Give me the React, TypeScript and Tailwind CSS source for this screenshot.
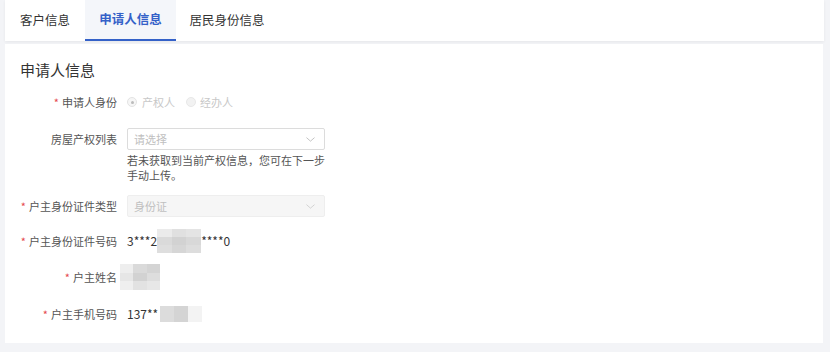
import { ChevronDown } from "lucide-react";

const font = { fontFamily: '"Noto Sans CJK SC", "Noto Sans", sans-serif' };

function Label({ text, required }: { text: string; required?: boolean }) {
  return (
    <div className="w-[97px] shrink-0 whitespace-nowrap text-right text-[11px] leading-[22px] text-[#555]">
      {required && <span className="mr-[3px] text-[#e5484d]">*</span>}
      {text}
    </div>
  );
}

function Mosaic({ cells, className }: { cells: string[][]; className: string }) {
  return (
    <div className={"flex flex-col blur-[0.6px] " + className}>
      {cells.map((row, i) => (
        <div key={i} className="flex flex-1">
          {row.map((c, j) => (
            <div key={j} className="flex-1" style={{ background: c }} />
          ))}
        </div>
      ))}
    </div>
  );
}

export default function App() {
  return (
    <div className="h-[352px] w-[830px] bg-[#f3f4f7] px-[5px]" style={font}>
      <div className="flex h-[41px] w-[819px] items-stretch bg-white shadow-[0_1px_3px_rgba(0,0,0,0.06)]">
        <div className="flex w-[80px] items-center justify-center text-[12.5px] text-[#333]">客户信息</div>
        <div className="flex w-[91px] items-center justify-center border-b-2 border-[#3461c8] bg-[#f4f6fa] text-[12.5px] font-semibold text-[#3461c8]">
          申请人信息
        </div>
        <div className="flex w-[102px] items-center justify-center text-[12.5px] text-[#333]">居民身份信息</div>
      </div>

      <div className="mt-[3px] h-[299px] w-[818px] bg-white pl-[15px] pt-[16px]">
        <div className="text-[15px] leading-[20px] text-[#333]">申请人信息</div>

        <div className="mt-[11px] flex flex-col">
          <div className="flex h-[22px] items-center">
            <Label text="申请人身份" required />
            <div className="ml-[10px] flex items-center gap-[11px] text-[11px] text-[#c8c8c8]">
              <span className="flex items-center gap-[5px]">
                <span className="flex h-[10px] w-[10px] items-center justify-center rounded-full border border-[#e3e3e3] bg-[#f6f6f6]">
                  <span className="h-[3px] w-[3px] rounded-full bg-[#bbb]" />
                </span>
                产权人
              </span>
              <span className="flex items-center gap-[4px]">
                <span className="h-[10px] w-[10px] rounded-full border border-[#e8e8e8] bg-[#f2f2f2]" />
                经办人
              </span>
            </div>
          </div>

          <div className="mt-[15px] flex items-start">
            <Label text="房屋产权列表" />
            <div className="ml-[10px] flex flex-col">
              <div className="flex h-[22px] w-[198px] items-center justify-between rounded-[2px] border border-[#dcdcdc] bg-white px-[6px] text-[11px] text-[#c0c0c0]">
                请选择
                <ChevronDown className="h-[13px] w-[15px] text-[#aaa]" strokeWidth={1.2} preserveAspectRatio="none" />
              </div>
              <div className="mt-[3px] w-[200px] text-[11px] leading-[15px] text-[#555]">
                若未获取到当前产权信息，您可在下一步手动上传。
              </div>
            </div>
          </div>

          <div className="mt-[12px] flex h-[22px] items-center">
            <Label text="户主身份证件类型" required />
            <div className="ml-[10px] flex h-[22px] w-[198px] items-center justify-between rounded-[2px] border border-[#eeeeee] bg-[#f6f6f6] px-[6px] text-[11px] text-[#c0c0c0]">
              身份证
              <ChevronDown className="h-[13px] w-[15px] text-[#c4c4c4]" strokeWidth={1.2} preserveAspectRatio="none" />
            </div>
          </div>

          <div className="mt-[13px] flex h-[22px] items-center">
            <Label text="户主身份证件号码" required />
            <div className="ml-[10px] flex items-center text-[12px] text-[#333]">
              3***2
              <Mosaic
                className="h-[24px] w-[44px]"
                cells={[
                  ["#ebebeb", "#e0e0e0", "#e4e4e4"],
                  ["#dadada", "#d2d2d2", "#d8d8d8"],
                  ["#dedede", "#d6d6d6", "#dddddd"],
                ]}
              />
              ****0
            </div>
          </div>

          <div className="mt-[14px] flex h-[22px] items-center">
            <Label text="户主姓名" required />
            <Mosaic
              className="ml-[3px] h-[26px] w-[40px]"
              cells={[
                ["#eeeeee", "#dadada", "#d4d4d4"],
                ["#e6e6e6", "#d2d2d2", "#dddddd"],
                ["#efefef", "#e2e2e2", "#e7e7e7"],
              ]}
            />
          </div>

          <div className="mt-[15px] flex h-[22px] items-center">
            <Label text="户主手机号码" required />
            <div className="ml-[10px] flex items-center text-[12px] text-[#333]">
              137**
              <Mosaic
                className="ml-[2px] h-[16px] w-[42px]"
                cells={[["#dcdcdc", "#d4d4d4", "#f3f3f3"]]}
              />
            </div>
          </div>
        </div>
      </div>
    </div>
  );
}
